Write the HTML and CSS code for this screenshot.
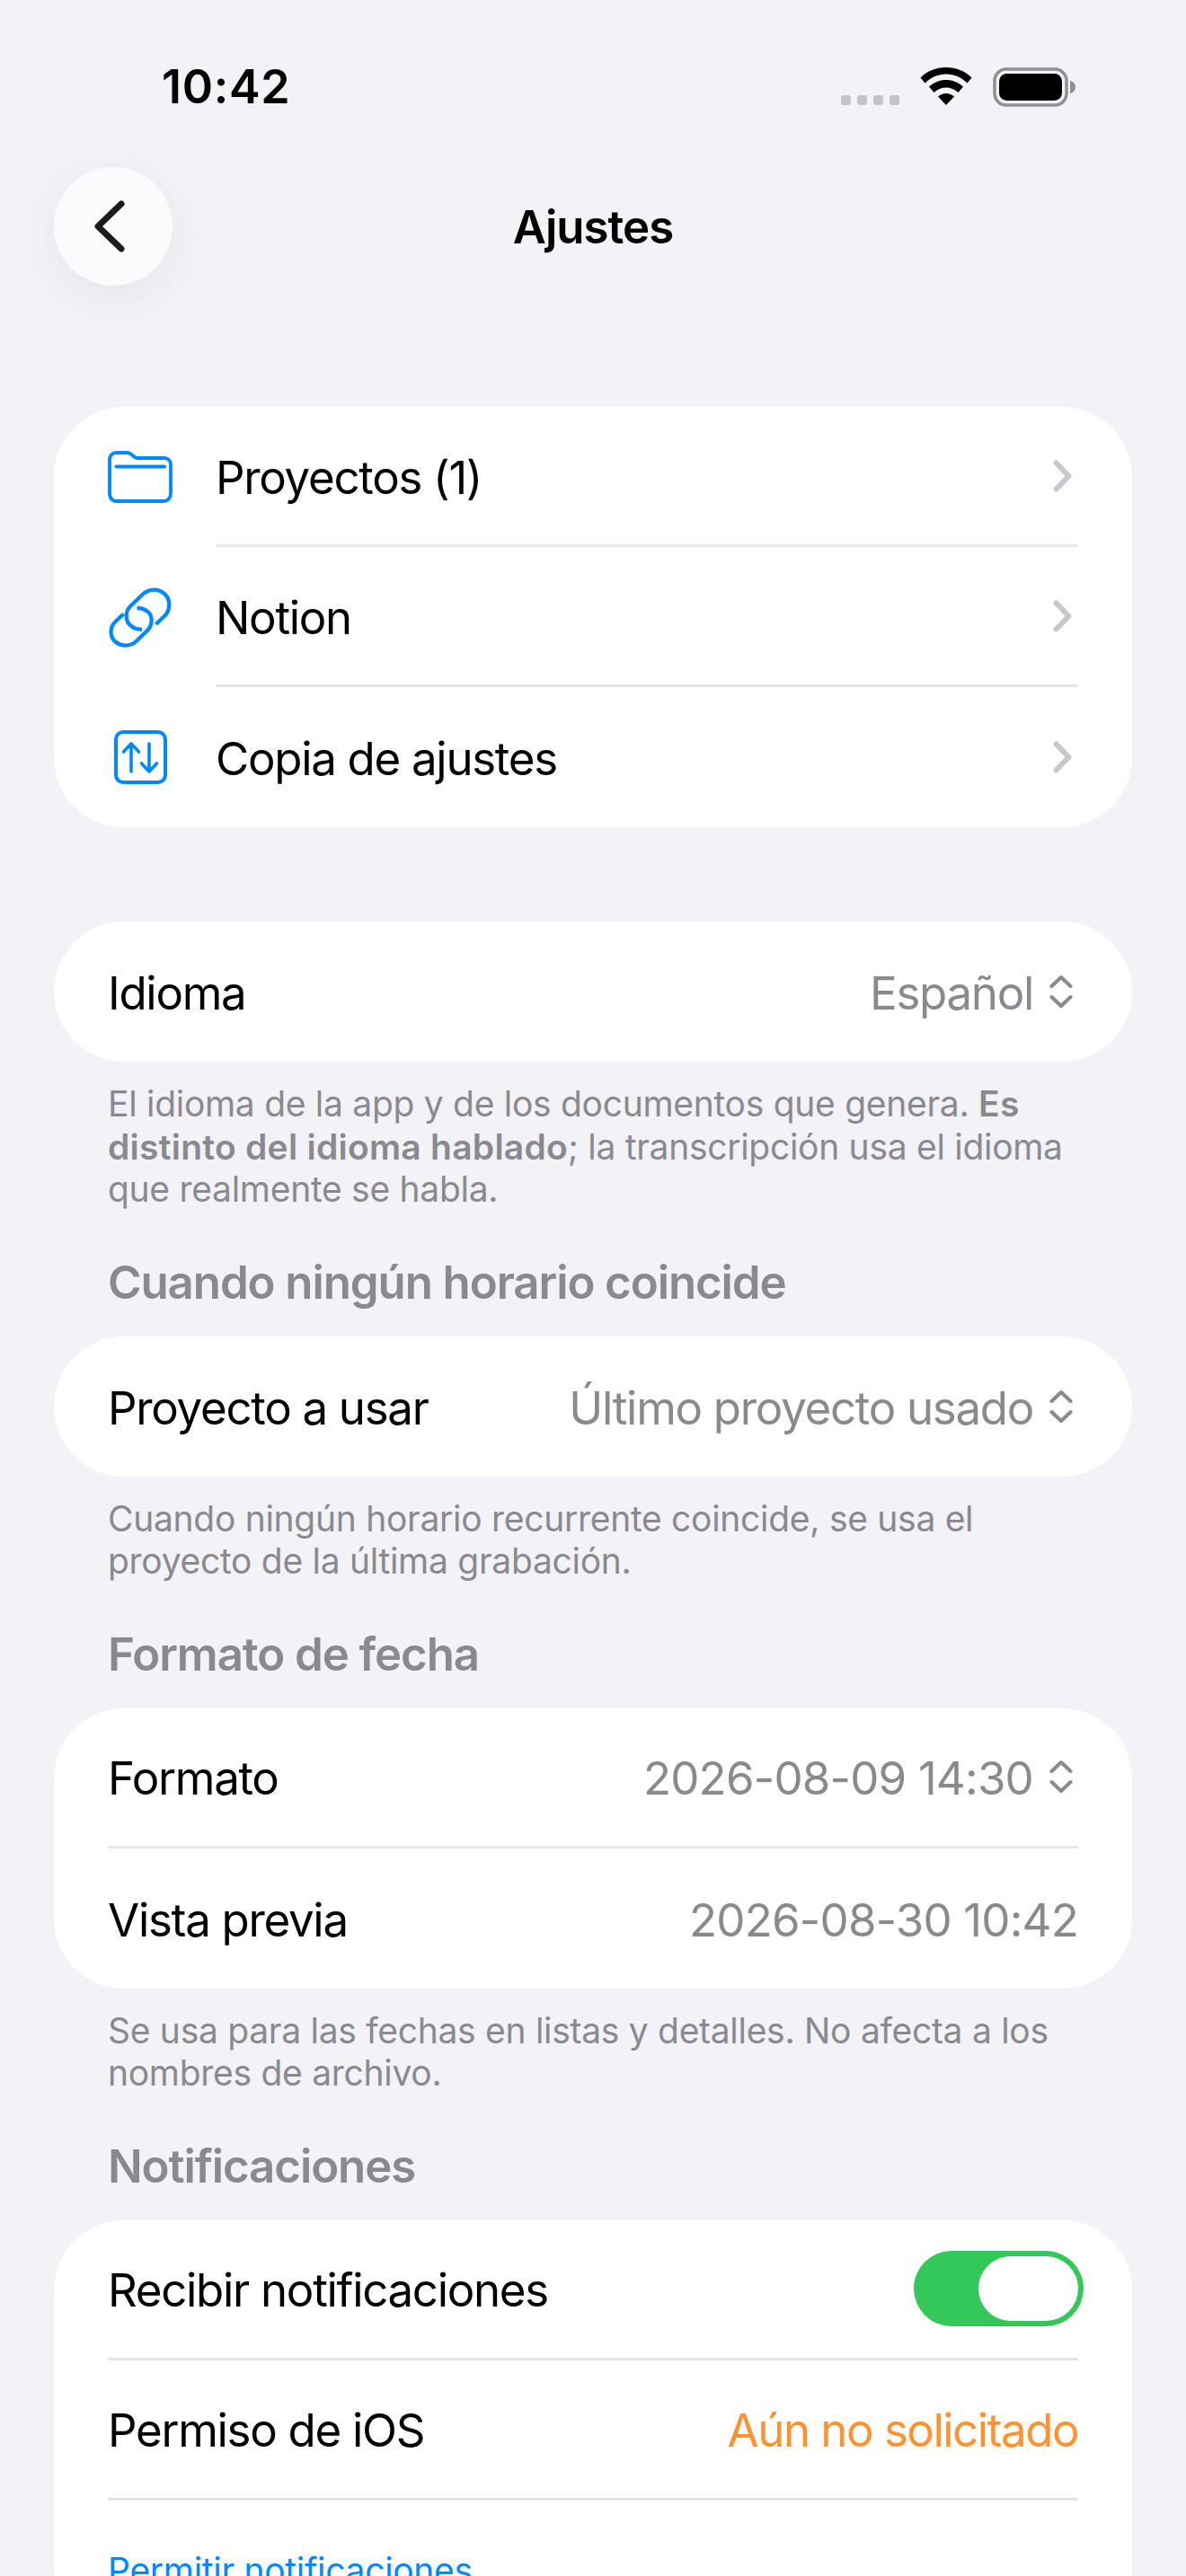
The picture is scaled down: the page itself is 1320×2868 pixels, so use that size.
FILE: index.html
```html
<!DOCTYPE html>
<html lang="es">
<head>
<meta charset="utf-8">
<title>Ajustes</title>
<link rel="stylesheet" href="styles.css">
</head>
<body>
<div class="screen">
  <header class="status">
    <span class="time">10:42</span>
    <div class="status-icons">
      <svg class="signal" width="66" height="12" viewBox="0 0 66 12"><g fill="#c4c4c8"><rect x="0" y="0" width="11" height="11" rx="3"/><rect x="18" y="0" width="11" height="11" rx="3"/><rect x="36" y="0" width="11" height="11" rx="3"/><rect x="54" y="0" width="11" height="11" rx="3"/></g></svg>
      <svg class="wifi" width="58" height="42" viewBox="0 0 58 42"><path d="M29 0C18 0 8 4 0.5 11.500L5.500 17.500C12 11 20 7.500 29 7.500S46 11 52.500 17.500L57.500 11.500C50 4 40 0 29 0Z" fill="#000"/><path d="M29 14C22 14 15.500 16.500 10 21.500L15.500 28C19 24.500 24 22.500 29 22.500S39 24.500 42.500 28L48 21.500C42.500 16.500 36 14 29 14Z" fill="#000"/><path d="M29 29C25.500 29 22.500 30.500 20 32.500L29 42L38 32.500C35.500 30.500 32.500 29 29 29Z" fill="#000"/></svg>
      <svg class="battery" width="94" height="44" viewBox="0 0 94 44"><rect x="2" y="2" width="80" height="40" rx="13" fill="none" stroke="#909094" stroke-width="3.500"/><rect x="7" y="7" width="70" height="30" rx="8.500" fill="#000"/><path d="M86 15C89 15.500 92 18 92 22S89 28.500 86 29Z" fill="#909094"/></svg>
    </div>
  </header>

  <nav class="navbar">
    <button class="back" aria-label="Atrás">
      <svg width="36" height="60" viewBox="0 0 36 60"><path d="M31 5L5 30L31 55" fill="none" stroke="#1c1c1e" stroke-width="7" stroke-linecap="round" stroke-linejoin="round"/></svg>
    </button>
    <h1 class="title">Ajustes</h1>
  </nav>

  <section class="card first">
    <div class="row icon-row">
      <svg class="lead" width="72" height="58" viewBox="0 0 72 58"><path d="M10 2H21C24 2 25.500 3 27 4.500C28.500 6 30 8 33 8H62C67 8 70 11 70 15V47C70 52 67 56 62 56H10C5 56 2 53 2 47V10C2 5 5 2 10 2Z" fill="none" stroke="#0088ff" stroke-width="3.800"/><path d="M9.500 17.500H63" stroke="#0088ff" stroke-width="4" stroke-linecap="round"/></svg>
      <div class="row-body"><span class="label">Proyectos (1)</span><svg class="chev" width="21" height="36" viewBox="0 0 21 36"><path d="M3.500 3.500L17.500 18L3.500 32.500" fill="none" stroke="#c7c7cc" stroke-width="6" stroke-linecap="round" stroke-linejoin="round"/></svg></div>
    </div>
    <div class="row icon-row">
      <svg class="lead" width="72" height="68" viewBox="0 0 72 68"><g fill="none" stroke="#0088ff" stroke-width="4.300"><path d="M53.500 42L63 33C70 26 70 14 63 8C56 2 46 2 39 8.500L25 22C19 28 19 39 26 44C29 46.500 33 48 38 47.500"/><path d="M17.500 30.500L8 39.500C2 45.500 2 56 8.500 61.500C15 67 25 67 31.500 61L44 49C50 43 50 33 45 28.500C42 25.500 38 24 32.500 24"/></g></svg>
      <div class="row-body"><span class="label">Notion</span><svg class="chev" width="21" height="36" viewBox="0 0 21 36"><path d="M3.500 3.500L17.500 18L3.500 32.500" fill="none" stroke="#c7c7cc" stroke-width="6" stroke-linecap="round" stroke-linejoin="round"/></svg></div>
    </div>
    <div class="row icon-row last">
      <svg class="lead" width="72" height="60" viewBox="0 0 72 60"><rect x="9" y="2" width="55" height="56" rx="8" fill="none" stroke="#0088ff" stroke-width="4"/><g fill="none" stroke="#0088ff" stroke-width="3.600" stroke-linecap="round" stroke-linejoin="round"><path d="M26 46V15M17.500 24L26 15L34.500 24"/><path d="M46 15V46M37.500 37L46 46L54.500 37"/></g></svg>
      <div class="row-body"><span class="label">Copia de ajustes</span><svg class="chev" width="21" height="36" viewBox="0 0 21 36"><path d="M3.500 3.500L17.500 18L3.500 32.500" fill="none" stroke="#c7c7cc" stroke-width="6" stroke-linecap="round" stroke-linejoin="round"/></svg></div>
    </div>
  </section>

  <section class="card second">
    <div class="row plain last">
      <span class="label">Idioma</span>
      <span class="value">Español<svg class="updown" width="26" height="38" viewBox="0 0 26 38"><path d="M2.500 13L13 3L23.500 13M2.500 25L13 35L23.500 25" fill="none" stroke="#8a8a8e" stroke-width="4" stroke-linecap="round" stroke-linejoin="round"/></svg></span>
    </div>
  </section>
  <p class="hint">El idioma de la app y de los documentos que genera. <strong>Es distinto del idioma hablado</strong>; la transcripción usa el idioma que realmente se habla.</p>

  <h2 class="section">Cuando ningún horario coincide</h2>
  <section class="card">
    <div class="row plain last">
      <span class="label">Proyecto a usar</span>
      <span class="value">Último proyecto usado<svg class="updown" width="26" height="38" viewBox="0 0 26 38"><path d="M2.500 13L13 3L23.500 13M2.500 25L13 35L23.500 25" fill="none" stroke="#8a8a8e" stroke-width="4" stroke-linecap="round" stroke-linejoin="round"/></svg></span>
    </div>
  </section>
  <p class="hint">Cuando ningún horario recurrente coincide, se usa el proyecto de la última grabación.</p>

  <h2 class="section">Formato de fecha</h2>
  <section class="card">
    <div class="row plain">
      <span class="label">Formato</span>
      <span class="value date">2026-08-09 14:30<svg class="updown" width="26" height="38" viewBox="0 0 26 38"><path d="M2.500 13L13 3L23.500 13M2.500 25L13 35L23.500 25" fill="none" stroke="#8a8a8e" stroke-width="4" stroke-linecap="round" stroke-linejoin="round"/></svg></span>
    </div>
    <div class="row plain last">
      <span class="label">Vista previa</span>
      <span class="value date">2026-08-30 10:42</span>
    </div>
  </section>
  <p class="hint">Se usa para las fechas en listas y detalles. No afecta a los nombres de archivo.</p>

  <h2 class="section">Notificaciones</h2>
  <section class="card">
    <div class="row plain">
      <span class="label">Recibir notificaciones</span>
      <span class="switch"><span class="knob"></span></span>
    </div>
    <div class="row plain">
      <span class="label">Permiso de iOS</span>
      <span class="value warn">Aún no solicitado</span>
    </div>
    <div class="row plain last">
      <span class="link">Permitir notificaciones</span>
    </div>
  </section>
</div>
</body>
</html>
```
FILE: styles.css
```css
html, body {
  margin: 0;
  padding: 0;
  height: 2868px;
  overflow: hidden;
  background: #f2f2f7;
}
body {
  font-family: Inter, "Noto Sans", "Liberation Sans", sans-serif;
  color: #000;
}
.screen {
  display: flex;
  flex-direction: column;
  padding: 0 60px;
}
.status {
  height: 186px;
  display: flex;
  justify-content: space-between;
  align-items: flex-start;
}
.time {
  margin: 66px 0 0 120px;
  font-size: 52px;
  line-height: 62px;
  font-weight: 600;
  letter-spacing: 0.7px;
}
.status-icons {
  display: flex;
  align-items: flex-start;
  margin: 75px 61px 0 0;
}
.signal { margin: 31px 22px 0 0; }
.wifi { margin-right: 23px; }
.navbar {
  height: 132px;
  display: flex;
  align-items: center;
  justify-content: center;
  position: relative;
}
.back {
  position: absolute;
  left: 0;
  top: 0;
  width: 132px;
  height: 132px;
  padding: 0 8px 0 0;
  border: 0;
  border-radius: 50%;
  background: #fbfbfe;
  box-shadow: 0 12px 60px rgba(0, 0, 0, 0.06);
  display: flex;
  align-items: center;
  justify-content: center;
}
.title {
  margin: 2px 0 0;
  font-size: 51px;
  line-height: 62px;
  font-weight: 600;
  letter-spacing: -1px;
}
.card {
  background: #fff;
  border-radius: 78px;
  overflow: hidden;
}
.first { margin-top: 135px; }
.second { margin-top: 105px; }
.row {
  height: 156px;
  display: flex;
  align-items: center;
  box-sizing: border-box;
}
.plain {
  margin: 0 60px;
  justify-content: space-between;
  border-bottom: 3px solid #e5e5e5;
}
.plain.last { border-bottom: 0; }
.icon-row { padding: 0 60px; }
.lead {
  flex: 0 0 72px;
  margin-right: 48px;
}
.row-body {
  flex: 1;
  align-self: stretch;
  display: flex;
  align-items: center;
  justify-content: space-between;
  border-bottom: 3px solid #e5e5e5;
}
.last .row-body { border-bottom: 0; }
.chev { margin-right: 7px; }
.label {
  padding-top: 4px;
  font-size: 51px;
  line-height: 62px;
  letter-spacing: -1.3px;
}
.value {
  display: flex;
  align-items: center;
  padding-top: 4px;
  font-size: 51px;
  line-height: 62px;
  letter-spacing: -1.3px;
  color: #8a8a8e;
}
.date { letter-spacing: -0.8px; }
.updown { margin: 0 6px 4px 18px; }
.warn { color: #ff9230; letter-spacing: -1.5px; }
.link {
  color: #0088ff;
  font-size: 39px;
  line-height: 48px;
  letter-spacing: -0.3px;
}
.hint {
  margin: 23px 60px 0;
  font-size: 39px;
  line-height: 47.500px;
  letter-spacing: -0.29px;
  color: #8a8a8e;
}
.hint strong { font-weight: 600; letter-spacing: 0.25px; }
.section {
  margin: 50px 60px 0;
  height: 60px;
  font-size: 51px;
  line-height: 60px;
  font-weight: 600;
  letter-spacing: -1.1px;
  color: #8a8a8e;
}
.section + .card { margin-top: 30px; }
.switch {
  position: relative;
  width: 189px;
  height: 84px;
  margin-right: -6px;
  border-radius: 42px;
  background: #34c759;
}
.knob {
  position: absolute;
  right: 6px;
  top: 6px;
  width: 111px;
  height: 72px;
  border-radius: 36px;
  background: #fff;
}
```
